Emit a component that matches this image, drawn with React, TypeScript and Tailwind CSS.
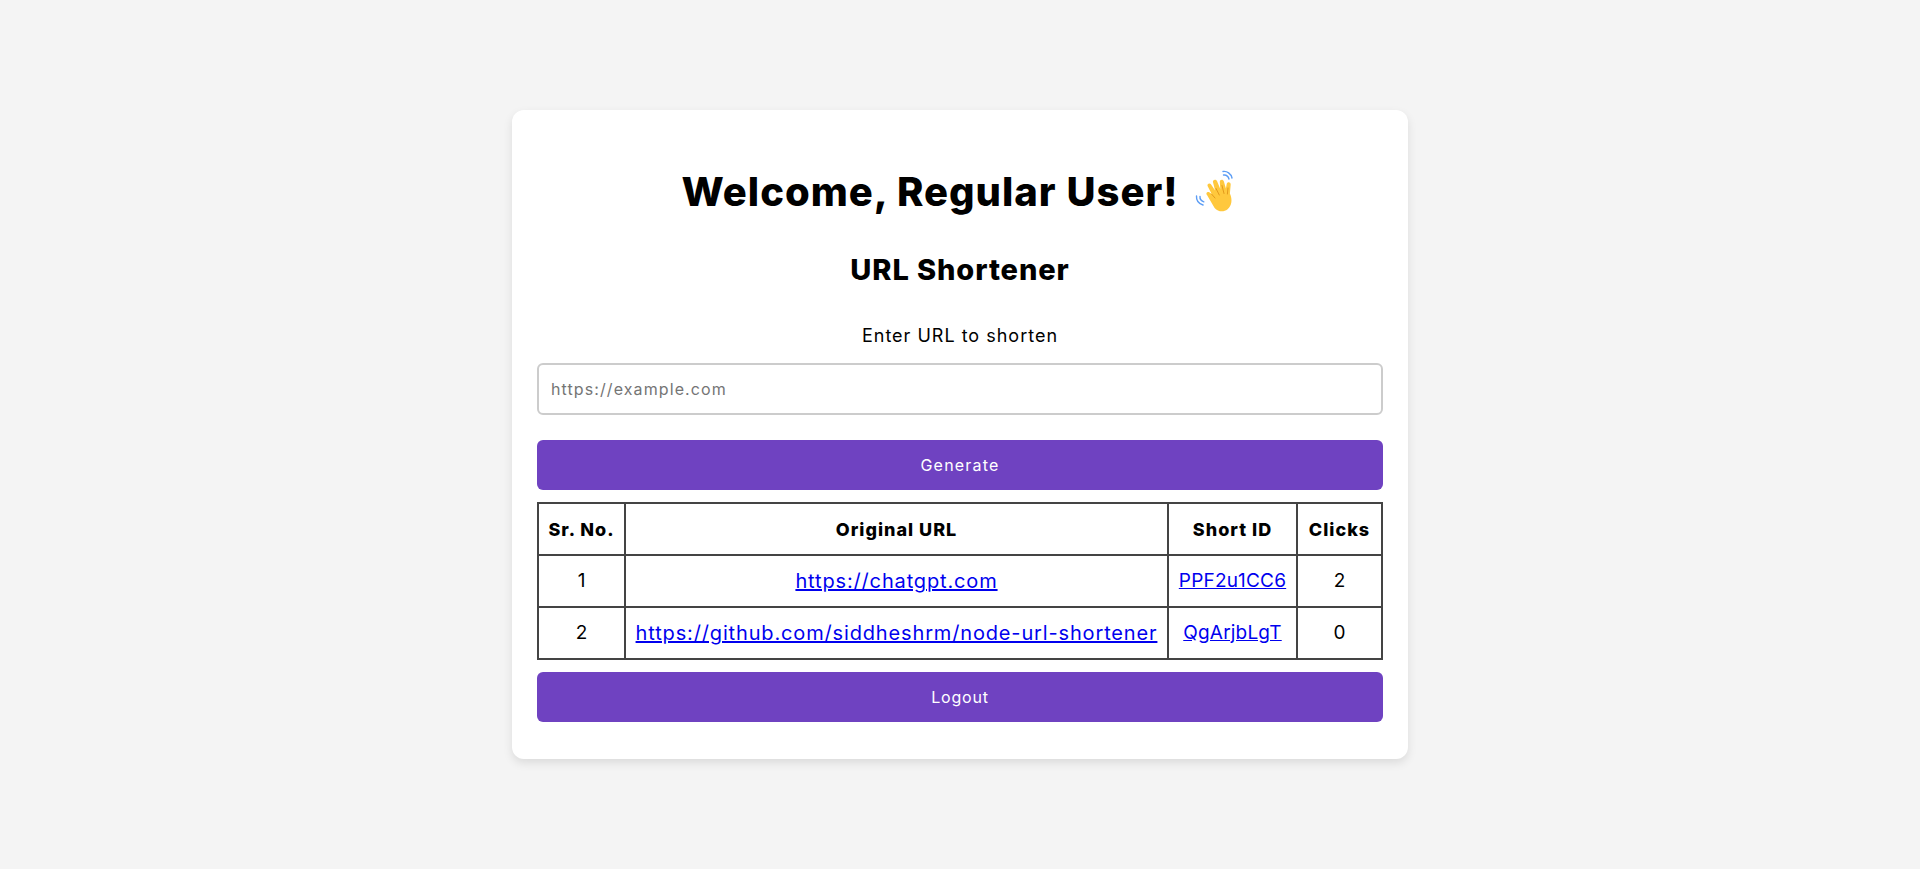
const rows = [
  { id: 1, url: "https://chatgpt.com", short: "PPF2u1CC6", clicks: 2 },
  { id: 2, url: "https://github.com/siddheshrm/node-url-shortener", short: "QgArjbLgT", clicks: 0 },
];

function WaveIcon() {
  return (
    <svg viewBox="0 0 44 44" className="w-[44px] h-[44px] shrink-0" aria-hidden="true">
      <g fill="none" stroke="#5c9df5" strokeWidth="1.4" strokeLinecap="round">
        <path d="M28 1.500c4-.6 8 2 9 6.500" />
        <path d="M28.500 5c2.500-.3 4.800 1.400 5.500 4" />
        <path d="M1.500 26c-.3 4 2 7.500 6.500 9" />
        <path d="M5 26.500c-.2 2.300 1.200 4.500 3.800 5.300" />
      </g>
      <path
        fill="#ffc83d"
        d="M12 25c-1.600-1.700.5-4 2.300-2.700l2.500 1.900-4.100-8c-1.100-2.300 2-3.900 3.400-1.800l4 6.200-2.100-8.300c-.7-2.700 2.900-3.700 4-1.200l3.300 7.800-.5-6.900c-.2-2.700 3.300-3.200 4.100-.6l2 7 .8-4.400c.5-2.700 4.100-2.100 4 .5l-.8 9c2.700 6.100 2 12-2.300 15.700-4.300 3.500-9.600 2.400-13-1.300z"
      />
      <g fill="none" stroke="#e39a1c" strokeWidth="1" strokeLinecap="round">
        <path d="M16.500 24l3.500 4" />
        <path d="M21 18.500l3.300 6.500" />
        <path d="M27 15.500l2 8" />
        <path d="M33 18l-.6 6" />
      </g>
    </svg>
  );
}

export default function App() {
  return (
    <div className="min-h-screen flex items-center justify-center bg-[#f4f4f4] font-['Inter',sans-serif] text-black">
      <div className="w-[896px] bg-white rounded-xl px-[25px] pt-[40px] pb-[37px] shadow-[0_4px_10px_rgba(0,0,0,0.1)] text-center">
        <h1 className="flex items-center justify-center gap-[16px] text-[40px] leading-[60px] font-extrabold tracking-[1px] h-[60px] mt-[12px]">
          Welcome, Regular User!
          <WaveIcon />
        </h1>
        <h2 className="mt-[28px] text-[29px] leading-[40px] font-extrabold tracking-[0.9px]">URL Shortener</h2>
        <label className="block mt-[32px] text-[18px] leading-[27px] tracking-[1px]">Enter URL to shorten</label>
        <input
          placeholder="https://example.com"
          className="block w-full h-[52px] mt-[14px] px-3 text-[16px] tracking-[1.1px] bg-white border-2 border-[#cccccc] rounded-md outline-none placeholder:text-[#757575]"
        />
        <button className="block w-full h-[50px] mt-[25px] bg-[#6f42c1] rounded-md text-white text-[16px] tracking-[1.2px]">Generate</button>
        <table className="w-full mt-[12px] table-fixed border-collapse text-[19px]">
          <thead>
            <tr className="h-[52px] text-[18px] tracking-[1px]">
              <th className="w-[87px] border-2 border-[#444444] font-extrabold">Sr. No.</th>
              <th className="border-2 border-[#444444] font-extrabold">Original URL</th>
              <th className="w-[129px] border-2 border-[#444444] font-extrabold">Short ID</th>
              <th className="w-[85px] border-2 border-[#444444] font-extrabold">Clicks</th>
            </tr>
          </thead>
          <tbody>
            {rows.map((r) => (
              <tr key={r.id} className="h-[52px]">
                <td className="border-2 border-[#444444]">{r.id}</td>
                <td className="border-2 border-[#444444] whitespace-nowrap">
                  <a href="#" className="text-[#0000ee] underline text-[20px] tracking-[0.85px]">{r.url}</a>
                </td>
                <td className="border-2 border-[#444444]">
                  <a href="#" className="text-[#0000ee] underline tracking-[0.2px]">{r.short}</a>
                </td>
                <td className="border-2 border-[#444444]">{r.clicks}</td>
              </tr>
            ))}
          </tbody>
        </table>
        <button className="block w-full h-[50px] mt-[12px] bg-[#6f42c1] rounded-md text-white text-[16px] tracking-[0.8px]">Logout</button>
      </div>
    </div>
  );
}
